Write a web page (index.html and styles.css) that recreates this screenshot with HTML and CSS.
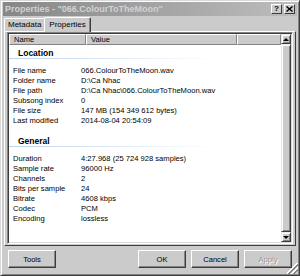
FILE: index.html
```html
<!DOCTYPE html>
<html lang="en">
<head>
    <meta charset="UTF-8">
    <title>Properties</title>
    <link rel="stylesheet" href="styles.css">
</head>
<body>
    <div class="window">
        <div class="titlebar">
            <span class="title">Properties - "066.ColourToTheMoon"</span>
            <div class="title-btns">
                <span class="tbtn help">?</span>
                <span class="tbtn">
                    <svg width="7" height="6" viewBox="0 0 7 6"><path d="M0.5 0.5 L6.5 5.5 M6.5 0.5 L0.5 5.5" stroke="#000" stroke-width="1.4"/></svg>
                </span>
            </div>
        </div>
        <div class="tabs">
            <div class="tab">Metadata</div>
            <div class="tab active">Properties</div>
        </div>
        <div class="panel">
            <div class="list">
                <div class="list-main">
                    <div class="header">
                        <div class="hcell name">Name</div>
                        <div class="hcell value">Value</div>
                        <div class="hcell rest"></div>
                    </div>
                    <div class="group">Location</div>
                    <div class="items">
                        <div class="row"><span class="key">File name</span><span>066.ColourToTheMoon.wav</span></div>
                        <div class="row"><span class="key">Folder name</span><span>D:\Ca Nhac</span></div>
                        <div class="row"><span class="key">File path</span><span>D:\Ca Nhac\066.ColourToTheMoon.wav</span></div>
                        <div class="row"><span class="key">Subsong index</span><span>0</span></div>
                        <div class="row"><span class="key">File size</span><span>147 MB (154 349 612 bytes)</span></div>
                        <div class="row"><span class="key">Last modified</span><span>2014-08-04 20:54:09</span></div>
                    </div>
                    <div class="group">General</div>
                    <div class="items">
                        <div class="row"><span class="key">Duration</span><span>4:27.968 (25 724 928 samples)</span></div>
                        <div class="row"><span class="key">Sample rate</span><span>96000 Hz</span></div>
                        <div class="row"><span class="key">Channels</span><span>2</span></div>
                        <div class="row"><span class="key">Bits per sample</span><span>24</span></div>
                        <div class="row"><span class="key">Bitrate</span><span>4608 kbps</span></div>
                        <div class="row"><span class="key">Codec</span><span>PCM</span></div>
                        <div class="row"><span class="key">Encoding</span><span>lossless</span></div>
                    </div>
                </div>
                <div class="scrollbar">
                    <div class="sb-btn"><span class="arrow up"></span></div>
                    <div class="thumb"></div>
                    <div class="sb-btn"><span class="arrow down"></span></div>
                </div>
            </div>
        </div>
        <div class="buttons">
            <button class="btn">Tools</button>
            <span class="spacer"></span>
            <button class="btn">OK</button>
            <button class="btn">Cancel</button>
            <button class="btn disabled">Apply</button>
        </div>
        <div class="grip"></div>
    </div>
</body>
</html>
```

FILE: styles.css
```css
body {
    margin: 0;
    font-family: "Liberation Sans", Arial, sans-serif;
    font-size: 7.6px;
    color: #000;
    background: #cbcbcb;
}
.window {
    position: relative;
    width: 300px;
    height: 276px;
    box-sizing: border-box;
    background: #cbcbcb;
    border: 1px solid;
    border-color: #d8d8d8 #3c3c3c #3c3c3c #d8d8d8;
    box-shadow: inset 1px 1px 0 #fff, inset -1px -1px 0 #848484;
    padding: 1px 2px 0 2px;
    display: flex;
    flex-direction: column;
}
.titlebar {
    height: 14px;
    display: flex;
    align-items: center;
    justify-content: space-between;
    background: linear-gradient(to right, #878787, #bdbdbd);
    padding: 0 2px 0 2px;
}
.title {
    color: #d2d2d2;
    font-weight: bold;
    font-size: 9px;
}
.title-btns {
    display: flex;
    gap: 2px;
}
.tbtn {
    width: 9px;
    height: 8px;
    display: flex;
    align-items: center;
    justify-content: center;
    background: #cbcbcb;
    border: 1px solid;
    border-color: #fff #3c3c3c #3c3c3c #fff;
    font-weight: bold;
    font-size: 8px;
    line-height: 8px;
}
.tabs {
    height: 15px;
    display: flex;
    align-items: flex-end;
    padding-left: 1px;
}
.tab {
    height: 12px;
    line-height: 12px;
    padding: 0 3px;
    border: 1px solid;
    border-bottom: none;
    border-color: #fff #6a6a6a #fff #fff;
    border-radius: 2px 2px 0 0;
    font-size: 8px;
}
.tab.active {
    height: 14px;
    line-height: 14px;
    padding: 0 4px;
    margin-left: -1px;
    border-right-color: #3c3c3c;
    box-shadow: inset -1px 0 0 #848484;
    position: relative;
    z-index: 1;
    margin-bottom: -1px;
    background: #cbcbcb;
}
.panel {
    height: 215px;
    box-sizing: border-box;
    margin: 0 1px;
    border: 1px solid;
    border-color: #fff #3c3c3c #3c3c3c #fff;
    padding: 0 2px 1px 2px;
    display: flex;
}
.list {
    flex: 1;
    display: flex;
    background: #fff;
    border: 1px solid;
    border-color: #848484 #fff #fff #848484;
    box-shadow: inset 1px 1px 0 #3c3c3c, inset -1px -1px 0 #d8d8d8;
    padding: 1px;
}
.list-main {
    flex: 1;
}
.header {
    display: flex;
    height: 11px;
}
.hcell {
    box-sizing: border-box;
    height: 11px;
    line-height: 10px;
    padding-left: 4px;
    background: #cbcbcb;
    border: 1px solid;
    border-color: #fff #848484 #848484 #fff;
}
.hcell.name {
    width: 77px;
}
.hcell.value {
    width: 151px;
}
.hcell.rest {
    flex: 1;
}
.group {
    margin-top: 3px;
    height: 11px;
    line-height: 11px;
    padding-left: 9px;
    font-weight: bold;
    font-size: 8.5px;
    width: 200px;
    background: linear-gradient(to right, #b9d3ee, #fff) no-repeat left bottom / 100% 1px;
}
.group + .items {
    margin-top: 7px;
    margin-bottom: 10px;
}
.row {
    display: flex;
    height: 10px;
    line-height: 10px;
}
.key {
    width: 68px;
    padding-left: 4px;
}
.scrollbar {
    width: 10px;
    display: flex;
    flex-direction: column;
    background: #e6e6e6;
}
.sb-btn, .thumb {
    box-sizing: border-box;
    background: #cbcbcb;
    border: 1px solid;
    border-color: #e8e8e8 #3c3c3c #3c3c3c #e8e8e8;
    box-shadow: inset 1px 1px 0 #fff, inset -1px -1px 0 #848484;
}
.sb-btn {
    height: 10px;
    display: flex;
    align-items: center;
    justify-content: center;
}
.thumb {
    flex: 1;
}
.arrow {
    width: 0;
    height: 0;
    border-left: 3px solid transparent;
    border-right: 3px solid transparent;
}
.arrow.up {
    border-bottom: 3px solid #000;
}
.arrow.down {
    border-top: 3px solid #000;
}
.buttons {
    display: flex;
    gap: 5px;
    margin-top: 4px;
    padding: 0 5px 0 5px;
}
.spacer {
    flex: 1;
}
.btn {
    width: 48px;
    height: 18px;
    padding: 0;
    font-family: "Liberation Sans", Arial, sans-serif;
    font-size: 7.6px;
    color: #000;
    background: #cbcbcb;
    border: 1px solid;
    border-color: #fff #3c3c3c #3c3c3c #fff;
    box-shadow: inset -1px -1px 0 #848484;
}
.btn.disabled {
    color: #989898;
    text-shadow: 1px 1px 0 #fff;
}
.grip {
    position: absolute;
    right: 1px;
    bottom: 1px;
    width: 11px;
    height: 11px;
    background: linear-gradient(135deg, transparent 45%, #fff 45%, #fff 52%, #848484 52%, #848484 60%, transparent 60%, transparent 68%, #fff 68%, #fff 74%, #848484 74%, #848484 82%, transparent 82%);
}
```
